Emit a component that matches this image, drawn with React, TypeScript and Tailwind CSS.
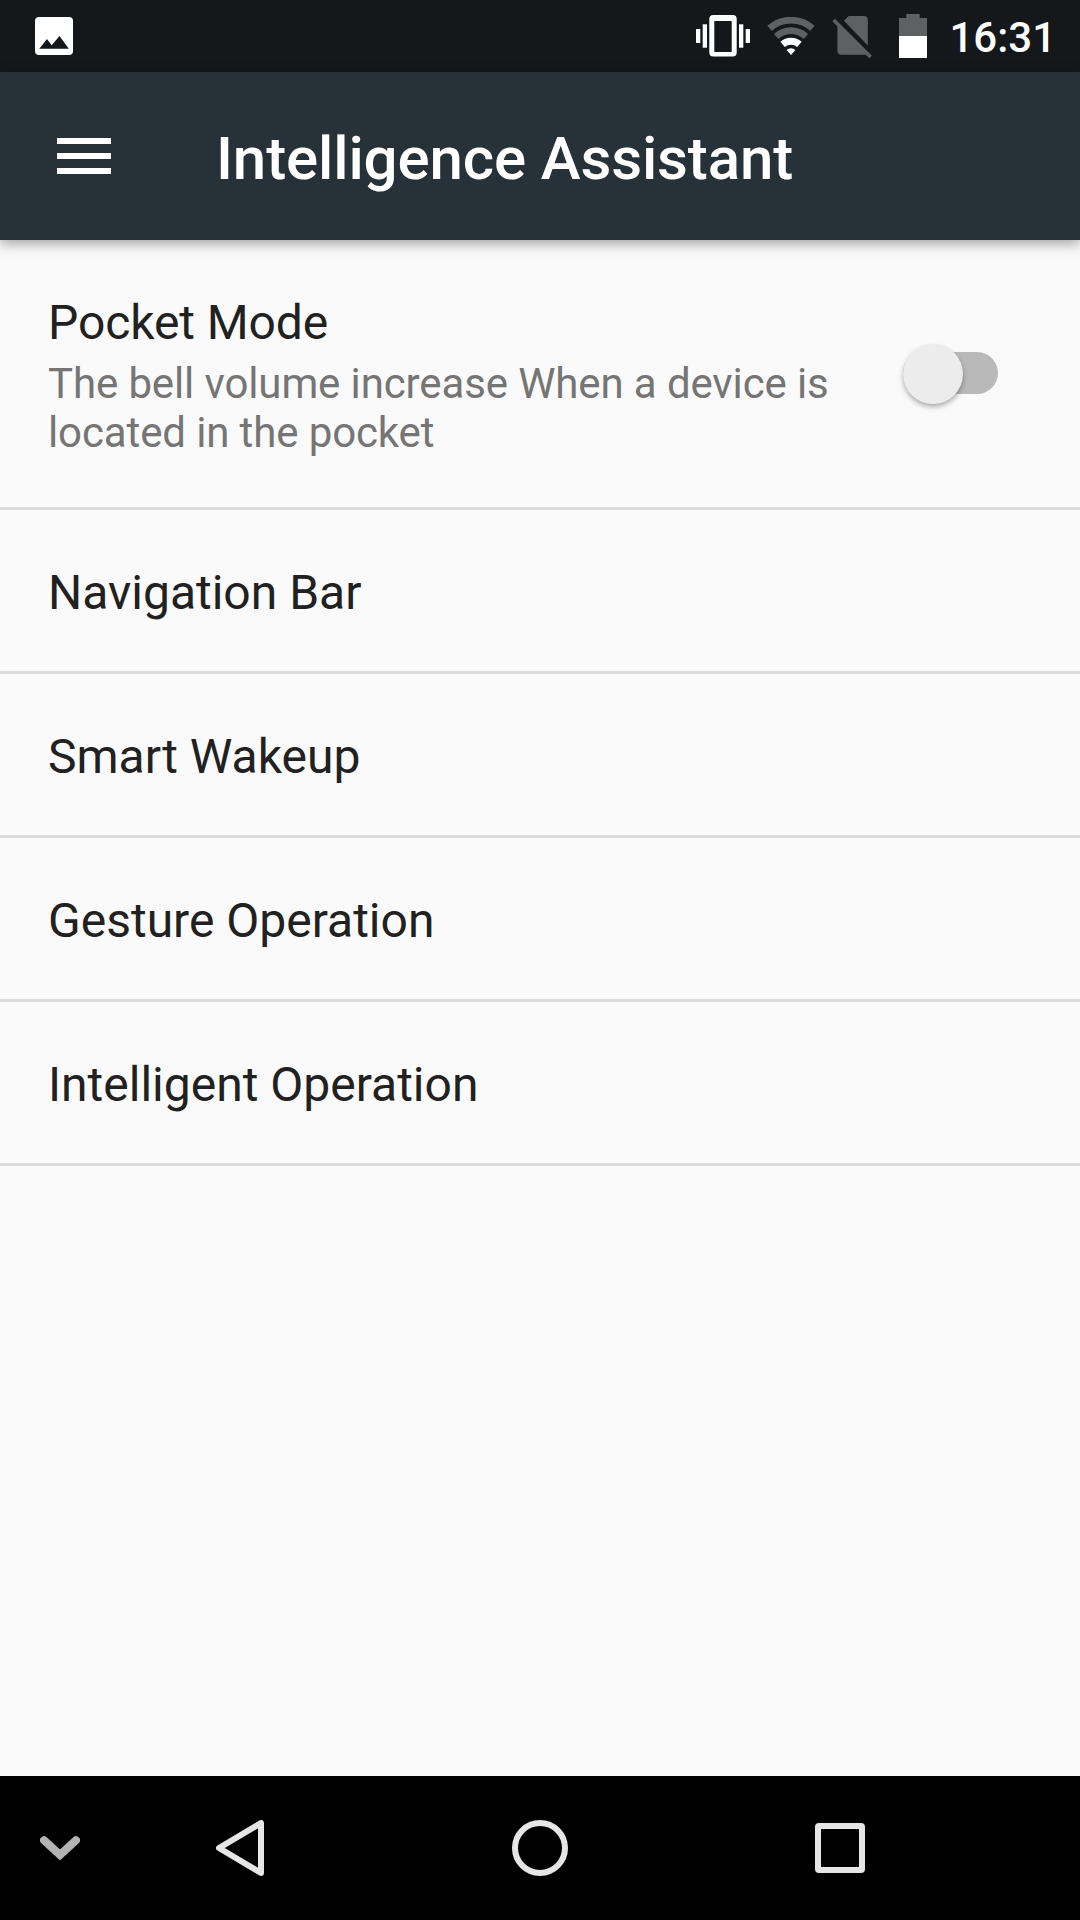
const ITEMS = ['Navigation Bar', 'Smart Wakeup', 'Gesture Operation', 'Intelligent Operation'];

function ImageIcon() {
  return (
    <svg width="38" height="38" viewBox="0 0 38 38" aria-hidden="true">
      <rect width="38" height="38" rx="4" fill="#fff" />
      <path d="M4.3 31.8 12 22l4.7 6.3L24.5 19l9.3 12.8z" fill="#14181b" />
    </svg>
  );
}

function VibrateIcon() {
  return (
    <svg width="54" height="42" viewBox="0 0 54 42" fill="#fff" aria-hidden="true">
      <rect x="0" y="14" width="4.3" height="14" />
      <rect x="6.7" y="9.3" width="4.3" height="23.4" />
      <path
        fillRule="evenodd"
        d="M17.3 0h19.4a4 4 0 0 1 4 4v33.5a4 4 0 0 1-4 4H17.3a4 4 0 0 1-4-4V4a4 4 0 0 1 4-4zM18.3 6v31h17.4V6z"
      />
      <rect x="43" y="9.3" width="4.3" height="23.4" />
      <rect x="49.7" y="14" width="4.3" height="14" />
    </svg>
  );
}

function WifiIcon() {
  return (
    <svg width="48" height="38" viewBox="0 0 48 38" aria-hidden="true">
      <g fill="none" strokeWidth="6.8">
        <path d="M2.6 11.4a32 32 0 0 1 42.8 0" stroke="#5f6062" />
        <path d="M9.2 19.4a22 22 0 0 1 29.6 0" stroke="#5f6062" />
        <path d="M15.6 27.4a12.7 12.7 0 0 1 16.8 0" stroke="#fff" />
      </g>
      <path d="M24 38 19.6 33a6.2 6.2 0 0 1 8.8 0z" fill="#fff" />
    </svg>
  );
}

function NoSimIcon() {
  return (
    <svg width="40" height="44" viewBox="0 -1 40 44" fill="#5f6062" aria-hidden="true">
      <path d="M12 5.7 16.7 1H32a3.8 3.8 0 0 1 3.8 3.8v25.7z" />
      <path d="M5.4 8.8 35 38.6a3.8 3.8 0 0 1-3 1.1H9.2a3.8 3.8 0 0 1-3.8-3.8z" />
      <path d="M1.6 5 38.6 42" stroke="#5f6062" strokeWidth="3.6" />
    </svg>
  );
}

function BatteryIcon() {
  return (
    <svg width="28" height="44" viewBox="0 0 28 44" aria-hidden="true">
      <path d="M7.3 0h13.4v4H28v18H0V4h7.3z" fill="#5f6062" />
      <rect y="22" width="28" height="22" fill="#fff" />
    </svg>
  );
}

function StatusBar() {
  return (
    <div className="flex h-[72px] items-center bg-[#14181b] pr-6 pl-[35px]">
      <ImageIcon />
      <div className="ml-auto flex items-center">
        <VibrateIcon />
        <span className="ml-[17px]">
          <WifiIcon />
        </span>
        <span className="ml-[17px]">
          <NoSimIcon />
        </span>
        <span className="ml-[27px]">
          <BatteryIcon />
        </span>
        <span className="ml-[22px] pt-1 text-[42px] leading-[50px] font-medium text-white">16:31</span>
      </div>
    </div>
  );
}

function AppBar() {
  return (
    <header className="relative flex h-[168px] items-center bg-[#263238] pl-[57px] shadow-[0_4px_12px_rgba(0,0,0,0.35)]">
      <button className="flex w-[54px] flex-col gap-[9px]" aria-label="Open menu">
        <span className="h-[6px] w-full bg-white" />
        <span className="h-[6px] w-full bg-white" />
        <span className="h-[6px] w-full bg-white" />
      </button>
      <h1 className="ml-[105px] pt-1.5 text-[60px] leading-[70px] font-medium tracking-[-0.12px] text-white">
        Intelligence Assistant
      </h1>
    </header>
  );
}

function Switch() {
  return (
    <div className="flex h-[42px] w-[95px] -mt-px ml-px rounded-full bg-[#b9b9b9]" role="switch" aria-checked="false">
      <span className="-mt-2 size-[60px] rounded-full bg-[#ececec] shadow-[0_3px_5px_rgba(0,0,0,0.3)]" />
    </div>
  );
}

function NavBar() {
  return (
    <nav className="flex h-36 items-center bg-black pl-10">
      <svg width="40" height="24" viewBox="0 0 40 24" aria-hidden="true">
        <path d="M4 4.3 20 19 36 4.3" fill="none" stroke="#b3b3b3" strokeWidth="8" strokeLinecap="round" />
        <path d="M14 11q6 4 12 0l-6 8z" fill="#b3b3b3" />
      </svg>
      <svg className="ml-[136px]" width="48" height="56" viewBox="0 0 48 56" aria-hidden="true">
        <path d="M45 3v50L3 28z" fill="none" stroke="#e6e6e6" strokeWidth="6" strokeLinejoin="round" />
      </svg>
      <span className="ml-[248px] size-14 rounded-full border-[6px] border-[#e6e6e6]" />
      <span className="ml-[247px] size-[50px] rounded-[4px] border-[6px] border-[#e6e6e6]" />
    </nav>
  );
}

export default function App() {
  return (
    <div className="flex h-[1920px] w-[1080px] flex-col overflow-hidden bg-[#fafafa] font-[Roboto,sans-serif] text-[#212121]">
      <StatusBar />
      <AppBar />
      <main className="flex-1">
        <div className="flex h-[270px] items-center border-b-[3px] border-[#dcdcdc] pr-[82px] pl-12">
          <div className="flex-1 pt-1">
            <h2 className="text-5xl leading-[56px] tracking-[-0.1px]">Pocket Mode</h2>
            <p className="mt-2 w-[800px] text-[42px] leading-[49px] tracking-[-0.12px] text-[#757575]">
              The bell volume increase When a device is located in the pocket
            </p>
          </div>
          <Switch />
        </div>
        {ITEMS.map(item => (
          <div key={item} className="flex h-[164px] items-center border-b-[3px] border-[#dcdcdc] pt-1 pl-12">
            <h2 className="text-5xl leading-[56px]">{item}</h2>
          </div>
        ))}
      </main>
      <NavBar />
    </div>
  );
}
